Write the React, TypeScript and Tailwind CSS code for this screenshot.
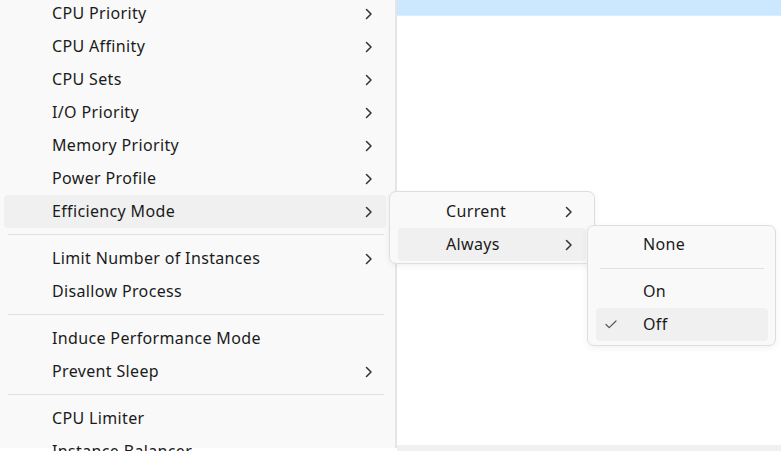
import React from "react";

const Chevron = () => (
  <svg width="8" height="12" viewBox="0 0 8 12" className="shrink-0 mt-[2px]">
    <path d="M1.5 1.5 L6 6 L1.5 10.5" fill="none" stroke="#333" strokeWidth="1.5" strokeLinecap="round" strokeLinejoin="round" />
  </svg>
);

const Check = () => (
  <svg width="12" height="9" viewBox="0 0 12 9">
    <path d="M1 4.5 L4.2 7.6 L11 1" fill="none" stroke="#555" strokeWidth="1.2" strokeLinecap="round" strokeLinejoin="round" />
  </svg>
);

type Item = { label: string; sub?: boolean; active?: boolean } | "sep";

const mainItems: Item[] = [
  { label: "CPU Priority", sub: true },
  { label: "CPU Affinity", sub: true },
  { label: "CPU Sets", sub: true },
  { label: "I/O Priority", sub: true },
  { label: "Memory Priority", sub: true },
  { label: "Power Profile", sub: true },
  { label: "Efficiency Mode", sub: true, active: true },
  "sep",
  { label: "Limit Number of Instances", sub: true },
  { label: "Disallow Process" },
  "sep",
  { label: "Induce Performance Mode" },
  { label: "Prevent Sleep", sub: true },
  "sep",
  { label: "CPU Limiter" },
  { label: "Instance Balancer" },
];

export default function App() {
  return (
    <div
      className="relative flex w-[781px] h-[451px] overflow-hidden bg-white text-[16px] tracking-[0.35px] text-[#1b1b1b]"
      style={{ fontFamily: '"Noto Sans", "Open Sans", sans-serif' }}
    >
      {/* main menu */}
      <div className="w-[397px] shrink-0 h-full bg-[#f9f9f9] border-r-2 border-[#e5e5e5] mt-[-3px]">
        {mainItems.map((it, i) =>
          it === "sep" ? (
            <div key={i} className="h-[14px] flex flex-col">
              <div className="mt-[6px] ml-[8px] mr-[11px] h-px bg-[#e1e1e1]" />
            </div>
          ) : (
            <div
              key={i}
              className={`h-[33px] ml-[4px] mr-[9px] rounded-[4px] flex items-center pl-[48px] pr-[13px] pb-[2px] ${
                it.active ? "bg-[#f0f0f0]" : ""
              }`}
            >
              <span className="flex-1 leading-none">{it.label}</span>
              {it.sub && <Chevron />}
            </div>
          )
        )}
      </div>

      {/* right area */}
      <div className="flex-1 flex flex-col">
        <div className="h-[16px] bg-[#cce8ff] border-b border-[#d9eefe]" />
        <div className="flex-1 bg-white" />
        <div className="h-[6px] bg-[#f0f0f0]" />
      </div>

      {/* submenu 1 */}
      <div className="absolute left-[389px] top-[191px] w-[206px] rounded-[7px] border border-[#dedede] bg-[#f9f9f9] pt-[3px] pb-[2px] px-[8px] shadow-[0_2px_6px_rgba(0,0,0,0.06)]">
        <div className="h-[33px] flex items-center pl-[48px] pr-[13px] pb-[2px] rounded-[4px]">
          <span className="flex-1 leading-none">Current</span>
          <Chevron />
        </div>
        <div className="h-[33px] flex items-center pl-[48px] pr-[13px] pb-[2px] rounded-[4px] bg-[#f0f0f0]">
          <span className="flex-1 leading-none">Always</span>
          <Chevron />
        </div>
      </div>

      {/* submenu 2 */}
      <div className="absolute left-[587px] top-[225px] w-[189px] rounded-[7px] border border-[#dedede] bg-[#f9f9f9] pt-[2px] pb-[4px] pl-[8px] pr-[7px] shadow-[0_2px_6px_rgba(0,0,0,0.06)]">
        <div className="h-[33px] flex items-center pl-[47px] pb-[2px] rounded-[4px]">
          <span className="leading-none">None</span>
        </div>
        <div className="h-[14px] flex flex-col">
          <div className="mt-[7px] ml-[4px] mr-[4px] h-px bg-[#e1e1e1]" />
        </div>
        <div className="h-[33px] flex items-center pl-[47px] pb-[2px] rounded-[4px]">
          <span className="leading-none">On</span>
        </div>
        <div className="h-[33px] flex items-center pb-[2px] rounded-[4px] bg-[#f0f0f0]">
          <div className="w-[47px] flex items-center pl-[9px] mt-[2px]">
            <Check />
          </div>
          <span className="leading-none">Off</span>
        </div>
      </div>
    </div>
  );
}
